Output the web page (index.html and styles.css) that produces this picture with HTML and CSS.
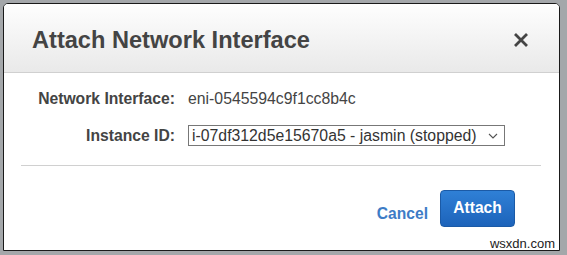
FILE: index.html
```html
<!DOCTYPE html>
<html>
<head>
<meta charset="utf-8">
<link rel="stylesheet" href="styles.css">
</head>
<body>
<div class="dialog">
  <div class="header">
    <h1 class="title">Attach Network Interface</h1>
    <button class="close" aria-label="Close">
      <svg width="16" height="16" viewBox="0 0 16 16"><path d="M2 2L14 14M14 2L2 14" stroke="#444" stroke-width="2.8" stroke-linecap="butt"/></svg>
    </button>
  </div>
  <div class="body">
    <div class="form">
      <div class="label">Network Interface:</div>
      <div class="value">eni-0545594c9f1cc8b4c</div>
      <div class="label">Instance ID:</div>
      <div class="selectwrap">
        <select class="select"><option>i-07df312d5e15670a5 - jasmin (stopped)</option></select>
        <svg class="chev" width="10" height="6" viewBox="0 0 10 6"><path d="M1 1L5 5L9 1" fill="none" stroke="#555" stroke-width="1.1"/></svg>
      </div>
    </div>
    <div class="divider"></div>
    <div class="actions">
      <a class="cancel" href="#">Cancel</a>
      <button class="attach">Attach</button>
    </div>
    <div class="footer"><span class="mark">wsxdn.com</span></div>
  </div>
</div>
</body>
</html>
```
FILE: styles.css
```css
html, body { margin: 0; padding: 0; }
body {
  width: 567px;
  height: 255px;
  background: #a4a7aa;
  padding: 3px 7px 4px 3px;
  box-sizing: border-box;
  font-family: "Liberation Sans", Arial, sans-serif;
}
.dialog {
  height: 100%;
  box-sizing: border-box;
  border: 1px solid #1a1a1a;
  border-radius: 5px 5px 0 0;
  background: #fff;
  display: flex;
  flex-direction: column;
  overflow: hidden;
}
.header {
  height: 69px;
  box-sizing: border-box;
  border-bottom: 1px solid #d0d0d0;
  background: linear-gradient(#fefefe, #e9e9e9);
  display: flex;
  align-items: center;
  justify-content: space-between;
  padding: 0 30px 0 28px;
}
.title {
  margin: 0;
  font-size: 23.6px;
  font-weight: bold;
  color: #444;
  line-height: 28px;
  padding-top: 4px;
}
.close {
  border: 0;
  background: none;
  padding: 0;
  width: 16px;
  height: 16px;
  display: flex;
  margin-top: 4px;
}
.body {
  flex: 1;
  display: flex;
  flex-direction: column;
  padding: 0 18px 0 17px;
}
.form {
  display: grid;
  grid-template-columns: 154px auto;
  column-gap: 13px;
  row-gap: 17px;
  align-items: center;
  padding-top: 17px;
  font-size: 15.8px;
  color: #444;
}
.label {
  font-weight: bold;
  text-align: right;
  line-height: 18px;
  font-size: 15.7px;
}
.value { line-height: 18px; color: #444; }
.selectwrap {
  position: relative;
  width: 317px;
  height: 21px;
}
.select {
  appearance: none;
  -webkit-appearance: none;
  width: 100%;
  height: 21px;
  box-sizing: border-box;
  border: 1px solid #777;
  border-radius: 0;
  background: #fff;
  font-family: "Liberation Sans", Arial, sans-serif;
  font-size: 15.8px;
  color: #333;
  padding: 0 0 0 3px;
  margin: 0;
}
.chev {
  position: absolute;
  right: 7px;
  top: 8px;
}
.divider {
  margin-top: 19px;
  height: 1px;
  background: #d0d0d0;
}
.actions {
  display: flex;
  justify-content: flex-end;
  align-items: center;
  gap: 12px;
  margin-top: 24px;
  padding-right: 26px;
}
.cancel {
  color: #3d7cc6;
  font-weight: bold;
  font-size: 15.6px;
  text-decoration: none;
  margin-top: 10px;
}
.attach {
  width: 75px;
  height: 37px;
  border: 1px solid #1b5aa6;
  border-radius: 4px;
  background: linear-gradient(#2f80d6, #1d63ba);
  color: #fff;
  font-family: "Liberation Sans", Arial, sans-serif;
  font-weight: bold;
  font-size: 15.6px;
  padding: 0 0 2px 0;
}
.footer {
  flex: 1;
  display: flex;
  justify-content: flex-end;
  align-items: flex-end;
}
.mark {
  font-size: 13px;
  color: #222;
  line-height: 13px;
  margin-right: -14px;
  padding-bottom: 0;
}
```
